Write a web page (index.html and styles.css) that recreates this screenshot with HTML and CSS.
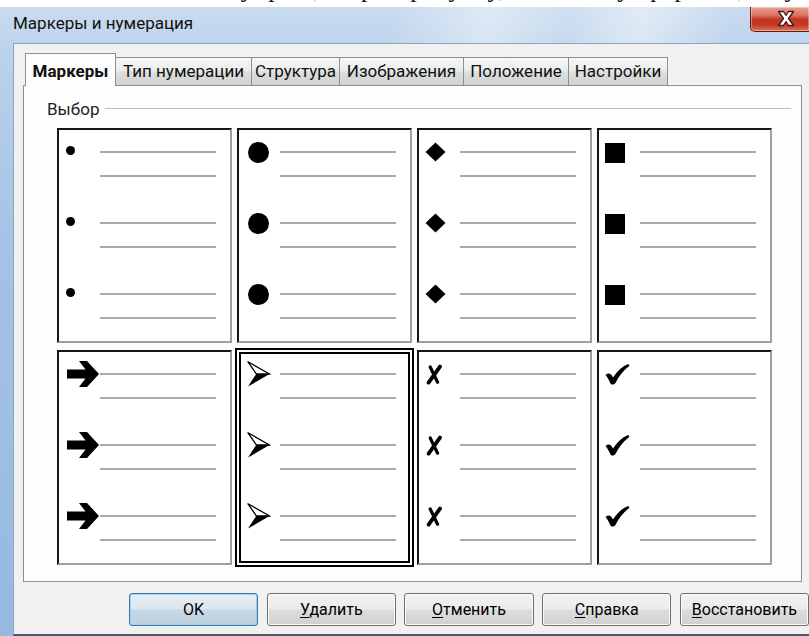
FILE: index.html
```html
<!DOCTYPE html>
<html lang="ru">
<head>
<meta charset="utf-8">
<title>Маркеры и нумерация</title>
<link rel="stylesheet" href="styles.css">
</head>
<body>
<div class="doc-strip"><p>вления у рис., в раз рисунку, обычно у формата, а упорядочить у</p></div>

<div class="window">
  <div class="titlebar">
    <span class="title">Маркеры и нумерация</span>
    <button class="close" type="button" aria-label="Закрыть">
      <svg width="18" height="17" viewBox="0 0 18 17">
        <path d="M1.5 1.5h5l2.5 3.8 2.5-3.8h5l-5 7 5 7h-5l-2.5-3.8-2.5 3.8h-5l5-7z" fill="#fff" stroke="#4a1a14" stroke-width="1.3" stroke-linejoin="round"/>
      </svg>
    </button>
  </div>

  <div class="client">
    <div class="tabs">
      <div class="tab active tab-markers">Маркеры</div>
      <div class="tab tab-type">Тип нумерации</div>
      <div class="tab tab-outline">Структура</div>
      <div class="tab tab-graphics">Изображения</div>
      <div class="tab tab-position">Положение</div>
      <div class="tab tab-options">Настройки</div>
    </div>

    <div class="panel">
      <div class="group-label"><span>Выбор</span><i class="rule"></i></div>

      <div class="grid">
        <!-- row 1 -->
        <div class="cell">
          <div class="item"><span class="mark m-dot"><b class="dot-s"></b></span><i class="line"></i><i class="line"></i></div>
          <div class="item"><span class="mark m-dot"><b class="dot-s"></b></span><i class="line"></i><i class="line"></i></div>
          <div class="item"><span class="mark m-dot"><b class="dot-s"></b></span><i class="line"></i><i class="line"></i></div>
        </div>
        <div class="cell">
          <div class="item"><span class="mark m-big"><b class="dot-l"></b></span><i class="line"></i><i class="line"></i></div>
          <div class="item"><span class="mark m-big"><b class="dot-l"></b></span><i class="line"></i><i class="line"></i></div>
          <div class="item"><span class="mark m-big"><b class="dot-l"></b></span><i class="line"></i><i class="line"></i></div>
        </div>
        <div class="cell">
          <div class="item"><span class="mark m-six"><svg width="21" height="20" viewBox="0 0 21 20"><path d="M10.5 0.5L20.5 10 10.5 19.5 0.5 10z"/></svg></span><i class="line"></i><i class="line"></i></div>
          <div class="item"><span class="mark m-six"><svg width="21" height="20" viewBox="0 0 21 20"><path d="M10.5 0.5L20.5 10 10.5 19.5 0.5 10z"/></svg></span><i class="line"></i><i class="line"></i></div>
          <div class="item"><span class="mark m-six"><svg width="21" height="20" viewBox="0 0 21 20"><path d="M10.5 0.5L20.5 10 10.5 19.5 0.5 10z"/></svg></span><i class="line"></i><i class="line"></i></div>
        </div>
        <div class="cell">
          <div class="item"><span class="mark m-six"><b class="square"></b></span><i class="line"></i><i class="line"></i></div>
          <div class="item"><span class="mark m-six"><b class="square"></b></span><i class="line"></i><i class="line"></i></div>
          <div class="item"><span class="mark m-six"><b class="square"></b></span><i class="line"></i><i class="line"></i></div>
        </div>

        <!-- row 2 -->
        <div class="cell">
          <div class="item"><span class="mark m-arrow"><svg width="32" height="26" viewBox="0 0 32 26"><path d="M0 8.5H18.5L12 0H20L32 13 20 26H12L18.5 17.5H0Z"/></svg></span><i class="line"></i><i class="line"></i></div>
          <div class="item"><span class="mark m-arrow"><svg width="32" height="26" viewBox="0 0 32 26"><path d="M0 8.5H18.5L12 0H20L32 13 20 26H12L18.5 17.5H0Z"/></svg></span><i class="line"></i><i class="line"></i></div>
          <div class="item"><span class="mark m-arrow"><svg width="32" height="26" viewBox="0 0 32 26"><path d="M0 8.5H18.5L12 0H20L32 13 20 26H12L18.5 17.5H0Z"/></svg></span><i class="line"></i><i class="line"></i></div>
        </div>
        <div class="cell selected">
          <div class="item"><span class="mark m-arrow"><svg width="24" height="26" viewBox="0 0 24 26"><path d="M1 0.8L23 13.2 9.5 13.2Z" fill="#fff" stroke="#000" stroke-width="1.3" stroke-linejoin="round"/><path d="M9.5 12.6L23.4 12.6 1 25.5Z"/></svg></span><i class="line"></i><i class="line"></i></div>
          <div class="item"><span class="mark m-arrow"><svg width="24" height="26" viewBox="0 0 24 26"><path d="M1 0.8L23 13.2 9.5 13.2Z" fill="#fff" stroke="#000" stroke-width="1.3" stroke-linejoin="round"/><path d="M9.5 12.6L23.4 12.6 1 25.5Z"/></svg></span><i class="line"></i><i class="line"></i></div>
          <div class="item"><span class="mark m-arrow"><svg width="24" height="26" viewBox="0 0 24 26"><path d="M1 0.8L23 13.2 9.5 13.2Z" fill="#fff" stroke="#000" stroke-width="1.3" stroke-linejoin="round"/><path d="M9.5 12.6L23.4 12.6 1 25.5Z"/></svg></span><i class="line"></i><i class="line"></i></div>
        </div>
        <div class="cell">
          <div class="item"><span class="mark m-six"><svg width="18" height="21" viewBox="0 0 18 21" class="cross"><path d="M5.2 3 L12.6 18.2"/><path d="M15 2.6 L3.6 18.6"/></svg></span><i class="line"></i><i class="line"></i></div>
          <div class="item"><span class="mark m-six"><svg width="18" height="21" viewBox="0 0 18 21" class="cross"><path d="M5.2 3 L12.6 18.2"/><path d="M15 2.6 L3.6 18.6"/></svg></span><i class="line"></i><i class="line"></i></div>
          <div class="item"><span class="mark m-six"><svg width="18" height="21" viewBox="0 0 18 21" class="cross"><path d="M5.2 3 L12.6 18.2"/><path d="M15 2.6 L3.6 18.6"/></svg></span><i class="line"></i><i class="line"></i></div>
        </div>
        <div class="cell">
          <div class="item"><span class="mark m-six"><svg width="25" height="21" viewBox="0 0 25 21"><path d="M0.5 11C2.6 8.6 5.4 9 7 11.8L8 13.4C12.2 7 17.2 2.4 22.6 0.3 24.2 -0.1 24.8 1.7 23.6 2.6 18 7 13.6 12.6 10.6 18.8 9.4 21 6.2 21.2 5.2 19 3.9 16 2.5 13.3 0.5 11Z"/></svg></span><i class="line"></i><i class="line"></i></div>
          <div class="item"><span class="mark m-six"><svg width="25" height="21" viewBox="0 0 25 21"><path d="M0.5 11C2.6 8.6 5.4 9 7 11.8L8 13.4C12.2 7 17.2 2.4 22.6 0.3 24.2 -0.1 24.8 1.7 23.6 2.6 18 7 13.6 12.6 10.6 18.8 9.4 21 6.2 21.2 5.2 19 3.9 16 2.5 13.3 0.5 11Z"/></svg></span><i class="line"></i><i class="line"></i></div>
          <div class="item"><span class="mark m-six"><svg width="25" height="21" viewBox="0 0 25 21"><path d="M0.5 11C2.6 8.6 5.4 9 7 11.8L8 13.4C12.2 7 17.2 2.4 22.6 0.3 24.2 -0.1 24.8 1.7 23.6 2.6 18 7 13.6 12.6 10.6 18.8 9.4 21 6.2 21.2 5.2 19 3.9 16 2.5 13.3 0.5 11Z"/></svg></span><i class="line"></i><i class="line"></i></div>
        </div>
      </div>
    </div>

    <div class="buttons">
      <button class="btn default" type="button">OK</button>
      <button class="btn" type="button"><u>У</u>далить</button>
      <button class="btn" type="button"><u>О</u>тменить</button>
      <button class="btn" type="button"><u>С</u>правка</button>
      <button class="btn" type="button"><u>В</u>осстановить</button>
    </div>
  </div>
</div>
</body>
</html>
```

FILE: styles.css
```css
* { box-sizing: border-box; }

html, body {
  margin: 0;
  padding: 0;
  width: 809px;
  height: 636px;
  overflow: hidden;
  background: #fff;
}

body {
  font-family: Roboto, "Open Sans", sans-serif;
  font-size: 17px;
  color: #000;
}

/* strip of the document page peeking above the dialog */
.doc-strip {
  height: 7px;
  overflow: hidden;
  background: #fff;
}
.doc-strip p {
  margin: -24px 0 0 150px;
  font-family: "Liberation Serif", serif;
  font-size: 26px;
  line-height: 26px;
  white-space: nowrap;
  word-spacing: 8px;
  color: #111;
}

/* dialog window with the glass frame */
.window {
  height: 629px;
  display: flex;
  flex-direction: column;
  padding-left: 13px;
  background: linear-gradient(180deg, #c4d8ee 0%, #b6cfea 12%, #a4c2e5 40%, #97b9e0 100%);
}

.titlebar {
  height: 36px;
  margin-left: -13px;
  padding: 6px 0 0 13px;
  display: flex;
  align-items: flex-start;
  background:
    linear-gradient(100deg, rgba(255,255,255,0) 48%, rgba(255,255,255,0.4) 60%, rgba(255,255,255,0.12) 70%, rgba(255,255,255,0.45) 79%, rgba(255,255,255,0) 90%),
    linear-gradient(180deg, #c9dbef 0%, #bfd4ec 100%);
}

.title {
  font-size: 17px;
  line-height: 20px;
  color: #111;
}

.close {
  margin: -6px 0 0 auto;
  width: 59px;
  height: 25px;
  padding: 0 0 0 26px;
  border: 1px solid #5e1f17;
  border-top: none;
  border-right: none;
  border-radius: 0 0 0 5px;
  display: flex;
  align-items: center;
  background: linear-gradient(180deg, #e7a395 0%, #d7725f 35%, #c2331f 52%, #c53a24 75%, #e0745a 100%);
  box-shadow: inset 0 0 0 1px rgba(255,255,255,0.35);
}
.close svg { display: block; margin-top: -2px; }

/* dialog body */
.client {
  flex: 1;
  display: flex;
  flex-direction: column;
  padding: 9px 0 0 9px;
  background: #f1f1f1;
  border-top: 1px solid #8fa3bd;
  border-left: 1px solid #8fa3bd;
  border-bottom: 2px solid #4d5a6a;
}

.tabs {
  display: flex;
  align-items: flex-end;
  height: 32px;
  padding-left: 2px;
}

.tab {
  height: 28px;
  padding: 0;
  margin-right: -1px;
  border: 1px solid #8c8e94;
  border-bottom: none;
  line-height: 27px;
  text-align: center;
  white-space: nowrap;
  background: linear-gradient(180deg, #f6f7f7 0%, #ebecec 45%, #dcdddd 55%, #d0d2d2 100%);
  color: #111;
}
.tab.active {
  position: relative;
  z-index: 1;
  height: 33px;
  margin-bottom: -1px;
  padding-top: 4px;
  font-weight: 700;
  background: #fdfdfd;
}
.tab-markers  { width: 91px; }
.tab-type     { width: 137px; }
.tab-outline  { width: 89px; }
.tab-graphics { width: 125px; }
.tab-position { width: 106px; }
.tab-options  { width: 100px; }

.panel {
  width: 779px;
  height: 497px;
  border: 1px solid #8c8e94;
  background: #fdfdfd;
  padding: 12px 10px 0 23px;
}

.group-label {
  display: flex;
  align-items: center;
  height: 22px;
  line-height: 22px;
  color: #222;
}
.rule {
  flex: 1;
  margin-left: 6px;
  height: 2px;
  border-top: 1px solid #b9bec4;
  border-bottom: 1px solid #fff;
}

.grid {
  margin: 8px 0 0 10px;
  display: grid;
  grid-template-columns: repeat(4, 175px);
  grid-auto-rows: 215px;
  column-gap: 5px;
  row-gap: 7px;
}

.cell {
  background: #fff;
  border: 2px solid;
  border-color: #161616 #a0a0a0 #a0a0a0 #161616;
  padding-top: 10px;
  display: flex;
  flex-direction: column;
  gap: 23px;
}
.cell.selected {
  border-color: #fff;
  outline: 2px solid #000;
  box-shadow: inset 0 0 0 2px #000;
}

.item {
  display: grid;
  grid-template-columns: 41px 116px;
  grid-template-rows: 24px 24px;
}
.mark {
  grid-row: 1;
  grid-column: 1;
  display: flex;
  align-items: center;
}
.mark svg { display: block; fill: #000; }
.mark svg.cross { fill: none; stroke: #000; stroke-linecap: round; }
.cross path:first-child { stroke-width: 3.2; }
.cross path:last-child { stroke-width: 3.8; }
.line {
  grid-column: 2;
  align-self: center;
  height: 2px;
  background: #a9a9a9;
}

.m-dot { padding-left: 7px; }
.m-big { padding-left: 9px; }
.m-six { padding-left: 6px; }
.m-arrow { padding-left: 8px; }

.dot-s {
  width: 9px;
  height: 9px;
  border-radius: 50%;
  background: #000;
  margin-top: -3px;
}
.dot-l {
  width: 21px;
  height: 21px;
  border-radius: 50%;
  background: #000;
  margin-top: 1px;
}
.square {
  width: 20px;
  height: 20px;
  background: #000;
  margin-top: 2px;
}

/* command buttons */
.buttons {
  display: flex;
  gap: 8.5px;
  margin-top: 11px;
  padding-left: 106px;
}
.btn {
  width: 130px;
  height: 33px;
  padding: 0;
  font-family: inherit;
  font-size: 16px;
  line-height: 31px;
  color: #000;
  border: 1px solid #707070;
  border-radius: 3px;
  background: linear-gradient(180deg, #f3f3f3 0%, #ebebeb 48%, #dddddd 52%, #d0d0d0 100%);
  box-shadow: inset 0 0 0 1px #fbfbfb;
}
.btn u { text-decoration-thickness: 1px; text-underline-offset: 2px; }
.btn.default {
  border-color: #3a78a8;
  background: linear-gradient(180deg, #e6eef4 0%, #dbe6ee 48%, #c7d8e5 52%, #bcd1e1 100%);
  box-shadow: inset 0 0 0 1px #9fd3ee;
}
```
